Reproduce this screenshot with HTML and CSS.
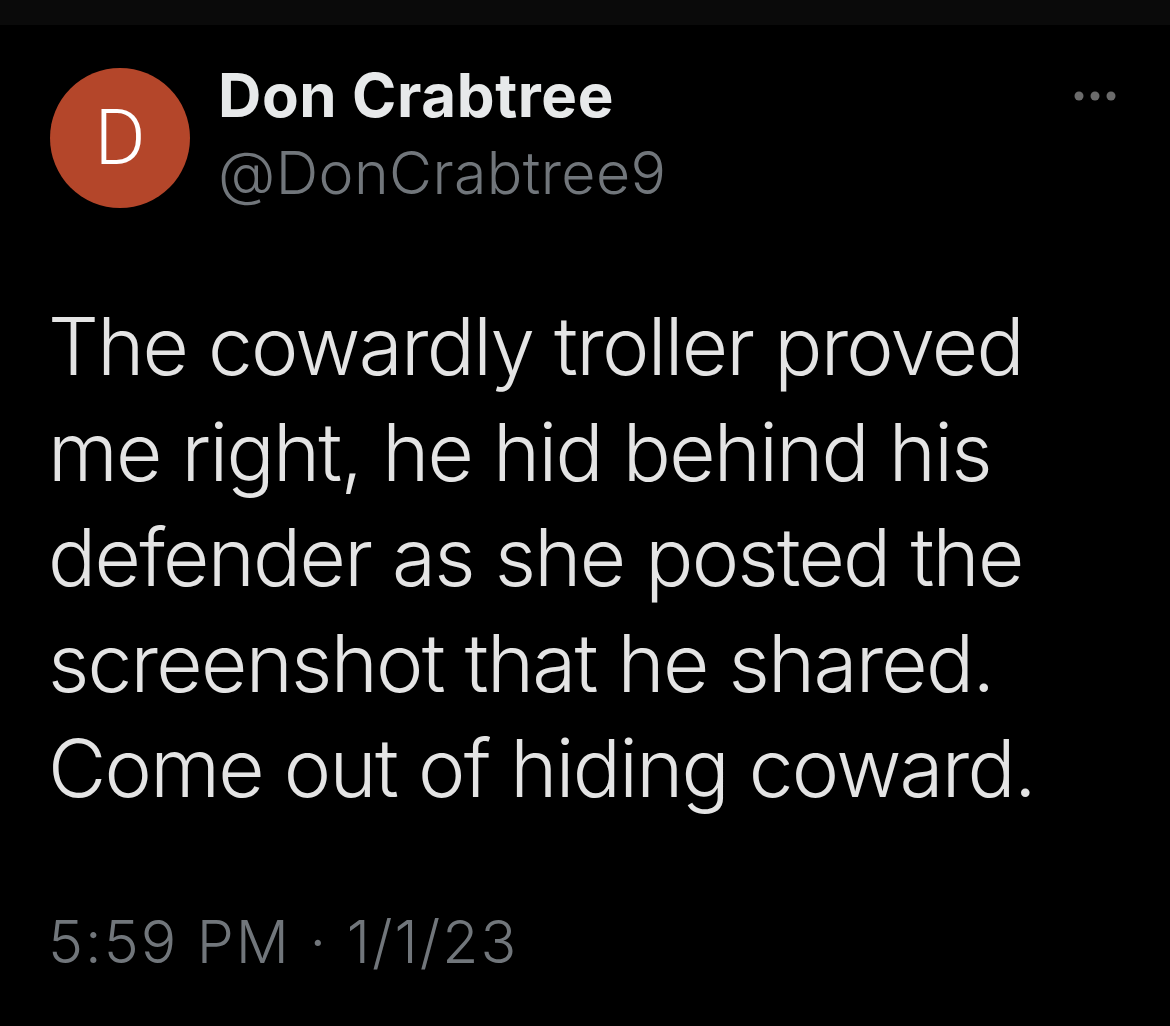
FILE: index.html
```html
<!DOCTYPE html>
<html lang="en">
<head>
<meta charset="utf-8">
<title>Tweet</title>
<link rel="stylesheet" href="styles.css">
</head>
<body>
<div class="statusbar"></div>
<article class="tweet">
  <header class="tweet-header">
    <div class="avatar">D</div>
    <div class="names">
      <div class="display-name">Don Crabtree</div>
      <div class="handle">@DonCrabtree9</div>
    </div>
    <svg class="more" width="42" height="20" viewBox="0 0 42 20" aria-hidden="true">
      <circle cx="5" cy="10" r="4.5"/>
      <circle cx="21" cy="10" r="4.5"/>
      <circle cx="37" cy="10" r="4.5"/>
    </svg>
  </header>
  <p class="tweet-text">The cowardly troller proved<br>me right, he hid behind his<br>defender as she posted the<br>screenshot that he shared.<br>Come out of hiding coward.</p>
  <div class="meta">5:59 PM · 1/1/23</div>
</article>
</body>
</html>
```
FILE: styles.css
```css
html, body {
  margin: 0;
  padding: 0;
  background: #000;
}
body {
  width: 1170px;
  height: 1026px;
  overflow: hidden;
  font-family: "Inter", "Roboto", "Liberation Sans", sans-serif;
  color: #e7e9ea;
}
.statusbar {
  height: 25px;
  background: #0a0a0a;
}
.tweet {
  padding: 32px 54px 0 48px;
}
.tweet-header {
  display: flex;
  align-items: flex-start;
}
.avatar {
  width: 140px;
  height: 140px;
  margin-top: 11px;
  margin-left: 2px;
  border-radius: 50%;
  background: #b4462a;
  color: #fff;
  font-family: "Roboto", "Liberation Sans", sans-serif;
  font-weight: 300;
  font-size: 78px;
  line-height: 140px;
  text-align: center;
  flex: none;
}
.names {
  margin-left: 28px;
}
.display-name {
  font-size: 60px;
  font-weight: 700;
  line-height: 77px;
  letter-spacing: 0.6px;
  color: #e7e9ea;
}
.handle {
  font-size: 59px;
  font-weight: 350;
  line-height: 78px;
  letter-spacing: 0.4px;
  color: #71767b;
}
.more {
  margin-left: auto;
  margin-top: 29px;
  fill: #6b6b6b;
  flex: none;
}
.tweet-text {
  margin: 81px 0 0 0;
  font-size: 80px;
  line-height: 105.5px;
  font-weight: 320;
  letter-spacing: -1.7px;
  color: #e4e4e4;
}
.meta {
  margin-top: 86px;
  font-size: 59px;
  line-height: 70px;
  font-weight: 350;
  letter-spacing: 2px;
  color: #71767b;
}
```
